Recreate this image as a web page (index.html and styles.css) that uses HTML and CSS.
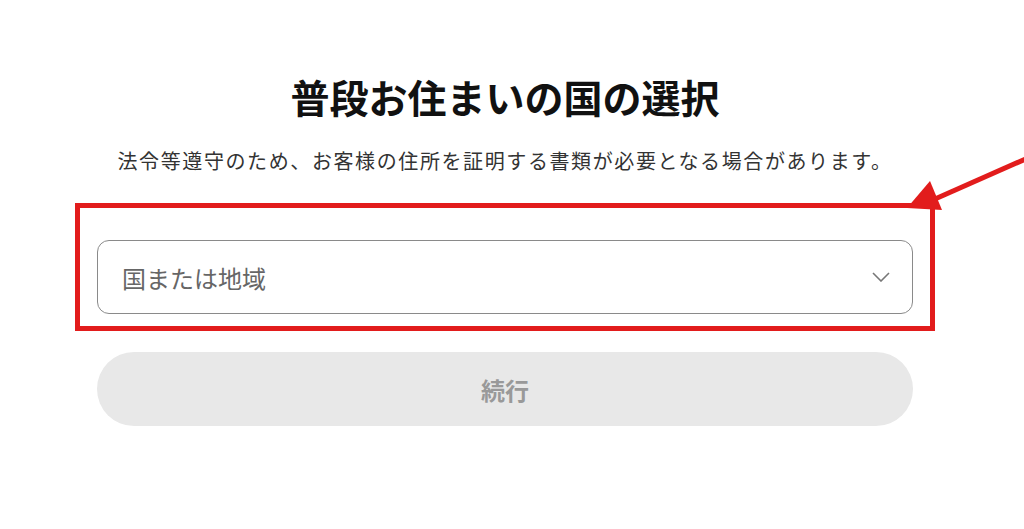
FILE: index.html
```html
<!DOCTYPE html>
<html lang="ja">
  <head>
    <meta charset="utf-8" />
    <meta name="viewport" content="width=device-width" />
    <title>普段お住まいの国の選択</title>
    <link rel="stylesheet" href="styles.css">
  </head>
  <body>
    <main class="panel">
      <h1 class="title">普段お住まいの国の選択</h1>
      <p class="lead">法令等遵守のため、お客様の住所を証明する書類が必要となる場合があります。</p>

      <div class="field">
        <div class="select">
          <span class="placeholder">国または地域</span>
          <svg class="chevron" width="18" height="10" viewBox="0 0 18 10">
            <path d="M1 1 L9 9 L17 1" fill="none" stroke="#777" stroke-width="1.6" />
          </svg>
        </div>
        <div class="highlight"></div>
      </div>

      <button class="continue" type="button" disabled>続行</button>
    </main>

    <!-- annotation arrow pointing at the box -->
    <svg class="arrow" width="1024" height="529" viewBox="0 0 1024 529">
      <line x1="1030" y1="157" x2="935" y2="199" stroke="#e21c1c" stroke-width="5" />
      <polygon points="907,208 930,181 942,210" fill="#e21c1c" />
    </svg>
  </body>
</html>
```

FILE: styles.css
```css
html {
  font-family: "Noto Sans CJK JP", "Noto Sans", sans-serif;
}

body {
  margin: 0;
  background: #fff;
  color: #1a1a1a;
}

.panel {
  width: 816px;
  margin-left: 97px;
  padding-top: 67px;
}

.title {
  margin: 0;
  text-align: center;
  font-size: 39px;
  font-weight: 700;
  line-height: 58px;
  color: #111;
}

.lead {
  margin: 22px 0 0;
  text-align: center;
  font-size: 20px;
  letter-spacing: 1.6px;
  line-height: 28px;
  color: #333;
}

.field {
  position: relative;
  margin-top: 65px;
}

.select {
  display: flex;
  align-items: center;
  justify-content: space-between;
  height: 72px;
  padding: 0 22px 0 24px;
  border: 1px solid #8a8a8a;
  border-radius: 12px;
}

.placeholder {
  font-size: 24px;
  color: #666;
}

.highlight {
  position: absolute;
  left: -22px;
  right: -22px;
  top: -37px;
  bottom: -17px;
  border: 5px solid #e21c1c;
}

.continue {
  display: block;
  width: 100%;
  height: 74px;
  margin-top: 38px;
  border: none;
  border-radius: 37px;
  background: #e8e8e8;
  font-family: inherit;
  font-size: 24px;
  font-weight: 700;
  color: #999;
}

.arrow {
  position: absolute;
  left: 0;
  top: 0;
  pointer-events: none;
}
```
